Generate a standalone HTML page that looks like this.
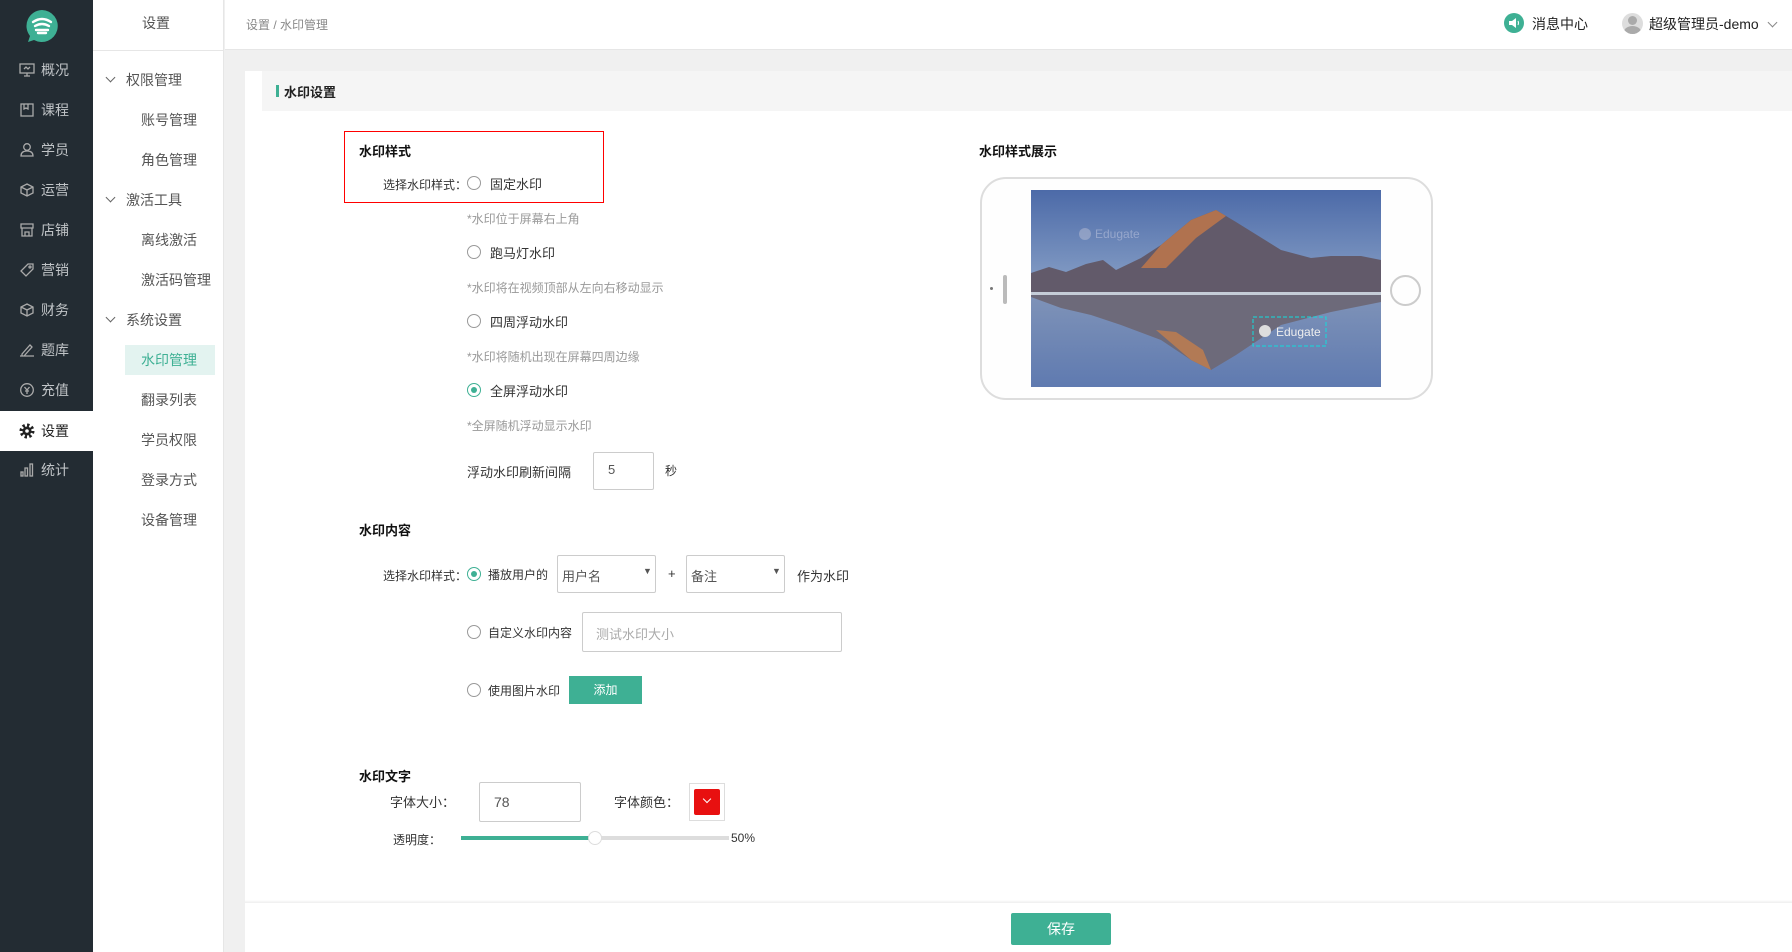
<!DOCTYPE html>
<html><head><meta charset="utf-8"><style>
*{margin:0;padding:0;box-sizing:border-box}
body{width:1792px;height:952px;overflow:hidden;position:relative;background:#f0f0f0;font-family:"Liberation Sans","Noto Sans CJK SC",sans-serif;color:#333}
.a{position:absolute;white-space:nowrap}
#side{left:0;top:0;width:93px;height:952px;background:#232c33}
.si{left:0;width:93px;height:40px;color:#c0c4c7;font-size:14px;line-height:40px}
.si svg{position:absolute;left:19px;top:13px}
.si span{position:absolute;left:41px}
#col2{left:93px;top:0;width:131px;height:952px;background:#fff;border-right:1px solid #e6e6e6}
.n{font-size:14px;color:#555;line-height:20px}
.chev{width:7px;height:7px;border-right:1.3px solid #666;border-bottom:1.3px solid #666;transform:rotate(45deg)}
.lbl{font-size:13px;color:#333}
.hint{font-size:12px;color:#999}
.radio{width:14px;height:14px;border:1px solid #999;border-radius:50%;background:#fff}
.radio.on{border-color:#3eb094}
.radio.on:after{content:"";position:absolute;left:3px;top:3px;width:6px;height:6px;border-radius:50%;background:#3eb094}
.box{border:1px solid #ccc;background:#fff;border-radius:2px}
.b{font-weight:bold;font-size:13px;color:#111}
</style></head><body>
<div class="a" id="side"></div>
<svg class="a" style="left:24px;top:9px" width="36" height="34" viewBox="0 0 36 34"><path d="M18 1a16 16 0 1 1-8 30l-6 2 2-6A16 16 0 0 1 18 1z" fill="#3eb094"/><path d="M9 13q9-6 18 0M11 17q7-4 14 0M12 21h12M14 24h8" stroke="#fff" stroke-width="2.4" fill="none" stroke-linecap="round"/></svg>
<div class="a si" style="top:50px"><svg width="16" height="14" viewBox="0 0 16 14" fill="none" stroke="#aaa" stroke-width="1.3"><rect x="1" y="1" width="14" height="9"/><path d="M5 13h6M8 10v3M5 6l2-2 2 2 2-2"/></svg><span>概况</span></div>
<div class="a si" style="top:90px"><svg width="16" height="14" viewBox="0 0 16 14" fill="none" stroke="#aaa" stroke-width="1.3"><rect x="2" y="1" width="12" height="12"/><path d="M5 1v5l2-1 2 1V1"/></svg><span>课程</span></div>
<div class="a si" style="top:130px"><svg width="16" height="14" viewBox="0 0 16 14" fill="none" stroke="#aaa" stroke-width="1.3"><circle cx="8" cy="4" r="3.3"/><path d="M2 13q0-5 6-5t6 5z"/></svg><span>学员</span></div>
<div class="a si" style="top:170px"><svg width="16" height="14" viewBox="0 0 16 14" fill="none" stroke="#aaa" stroke-width="1.3"><path d="M8 1l6 3v6l-6 3-6-3V4zM2 4l6 3 6-3M8 7v6"/></svg><span>运营</span></div>
<div class="a si" style="top:210px"><svg width="16" height="14" viewBox="0 0 16 14" fill="none" stroke="#aaa" stroke-width="1.3"><path d="M2 1h12v4H2zM3 5v8h10V5M6 13V9h4v4"/></svg><span>店铺</span></div>
<div class="a si" style="top:250px"><svg width="16" height="14" viewBox="0 0 16 14" fill="none" stroke="#aaa" stroke-width="1.3"><path d="M9 1h5v5l-7 7-5-5z"/><circle cx="11" cy="4" r="1"/></svg><span>营销</span></div>
<div class="a si" style="top:290px"><svg width="16" height="14" viewBox="0 0 16 14" fill="none" stroke="#aaa" stroke-width="1.3"><path d="M8 1l6 3v6l-6 3-6-3V4zM2 4l6 3 6-3M8 7v6"/></svg><span>财务</span></div>
<div class="a si" style="top:330px"><svg width="16" height="14" viewBox="0 0 16 14" fill="none" stroke="#aaa" stroke-width="1.3"><path d="M3 11l8-9 2 2-8 9H3zM1 13h14"/></svg><span>题库</span></div>
<div class="a si" style="top:370px"><svg width="16" height="14" viewBox="0 0 16 14" fill="none" stroke="#aaa" stroke-width="1.3"><circle cx="8" cy="7" r="6.3"/><path d="M5.5 4L8 7l2.5-3M8 7v4M6 8h4"/></svg><span>充值</span></div>
<div class="a si" style="top:411px;background:#fff;color:#222;"><svg width="16" height="16" viewBox="0 0 16 16" style="top:12px"><circle cx="8" cy="8" r="5.5" fill="none" stroke="#222" stroke-width="4" stroke-dasharray="2.2 2.1"/><circle cx="8" cy="8" r="4.5" fill="#222"/><circle cx="8" cy="8" r="1.8" fill="#fff"/></svg><span>设置</span></div>
<div class="a si" style="top:450px"><svg width="16" height="14" viewBox="0 0 16 14" fill="none" stroke="#aaa" stroke-width="1.3"><rect x="2" y="9" width="2" height="4"/><rect x="6" y="5" width="2.5" height="8"/><rect x="11" y="1" width="2.5" height="12"/></svg><span>统计</span></div>

<div class="a" id="col2"></div>
<div class="a" style="left:93px;top:50px;width:131px;height:1px;background:#e6e6e6"></div>
<div class="a n" style="left:142px;top:13px">设置</div>
<div class="a chev" style="left:107px;top:74px"></div><div class="a n" style="left:126px;top:70px">权限管理</div>
<div class="a n" style="left:141px;top:110px">账号管理</div>
<div class="a n" style="left:141px;top:150px">角色管理</div>
<div class="a chev" style="left:107px;top:194px"></div><div class="a n" style="left:126px;top:190px">激活工具</div>
<div class="a n" style="left:141px;top:230px">离线激活</div>
<div class="a n" style="left:141px;top:270px">激活码管理</div>
<div class="a chev" style="left:107px;top:314px"></div><div class="a n" style="left:126px;top:310px">系统设置</div>
<div class="a" style="left:125px;top:345px;width:90px;height:30px;background:#e3f3f0"></div>
<div class="a n" style="left:141px;top:350px;color:#3eb094">水印管理</div>
<div class="a n" style="left:141px;top:390px">翻录列表</div>
<div class="a n" style="left:141px;top:430px">学员权限</div>
<div class="a n" style="left:141px;top:470px">登录方式</div>
<div class="a n" style="left:141px;top:510px">设备管理</div>

<div class="a" style="left:225px;top:0;width:1567px;height:50px;background:#fff;border-bottom:1px solid #e6e6e6"></div>
<div class="a" style="left:246px;top:16px;font-size:12px;color:#888">设置 / 水印管理</div>
<div class="a" style="left:1504px;top:13px;width:20px;height:20px;border-radius:50%;background:#3eb094"></div>
<svg class="a" style="left:1508px;top:17px" width="12" height="12" viewBox="0 0 12 12"><path d="M1 4h3l4-3v10L4 8H1z" fill="#fff"/><path d="M10 4q1 2 0 4" stroke="#fff" fill="none"/></svg>
<div class="a" style="left:1532px;top:14px;font-size:14px;color:#222">消息中心</div>
<div class="a" style="left:1622px;top:13px;width:21px;height:21px;border-radius:50%;background:#ddd;overflow:hidden"><div class="a" style="left:6px;top:3px;width:9px;height:9px;border-radius:50%;background:#aaa"></div><div class="a" style="left:2px;top:13px;width:17px;height:12px;border-radius:50%;background:#aaa"></div></div>
<div class="a" style="left:1649px;top:14px;font-size:14px;color:#222">超级管理员-demo</div>
<div class="a chev" style="left:1769px;top:19px;border-color:#888"></div>

<div class="a" style="left:245px;top:71px;width:1547px;height:831px;background:#fff"></div>
<div class="a" style="left:262px;top:71px;width:1530px;height:40px;background:#f5f5f5"></div>
<div class="a" style="left:276px;top:85px;width:3px;height:12px;background:#3eb094"></div>
<div class="a" style="left:284px;top:82px;font-size:13px;color:#222;font-weight:bold">水印设置</div>

<div class="a" style="left:344px;top:131px;width:260px;height:72px;border:1px solid #f00"></div>
<div class="a b" style="left:359px;top:141px">水印样式</div>
<div class="a lbl" style="left:383px;top:176px;font-size:12px">选择水印样式：</div>
<div class="a radio" style="left:467px;top:176px"></div><div class="a lbl" style="left:490px;top:174px">固定水印</div>
<div class="a hint" style="left:467px;top:210px">*水印位于屏幕右上角</div>
<div class="a radio" style="left:467px;top:245px"></div><div class="a lbl" style="left:490px;top:243px">跑马灯水印</div>
<div class="a hint" style="left:467px;top:279px">*水印将在视频顶部从左向右移动显示</div>
<div class="a radio" style="left:467px;top:314px"></div><div class="a lbl" style="left:490px;top:312px">四周浮动水印</div>
<div class="a hint" style="left:467px;top:348px">*水印将随机出现在屏幕四周边缘</div>
<div class="a radio on" style="left:467px;top:383px"></div><div class="a lbl" style="left:490px;top:381px">全屏浮动水印</div>
<div class="a hint" style="left:467px;top:417px">*全屏随机浮动显示水印</div>
<div class="a lbl" style="left:467px;top:462px">浮动水印刷新间隔</div>
<div class="a box" style="left:593px;top:452px;width:61px;height:38px"></div>
<div class="a lbl" style="left:608px;top:462px;color:#555">5</div>
<div class="a lbl" style="left:665px;top:462px;font-size:12px">秒</div>

<div class="a b" style="left:359px;top:520px">水印内容</div>
<div class="a lbl" style="left:383px;top:567px;font-size:12px">选择水印样式：</div>
<div class="a radio on" style="left:467px;top:567px"></div><div class="a lbl" style="left:488px;top:566px;font-size:12px">播放用户的</div>
<div class="a box" style="left:557px;top:555px;width:99px;height:38px"></div>
<div class="a lbl" style="left:562px;top:566px;color:#555">用户名</div><div class="a" style="left:643px;top:566px;font-size:9px;color:#555">▼</div>
<div class="a lbl" style="left:668px;top:566px">+</div>
<div class="a box" style="left:686px;top:555px;width:99px;height:38px"></div>
<div class="a lbl" style="left:691px;top:566px;color:#555">备注</div><div class="a" style="left:772px;top:566px;font-size:9px;color:#555">▼</div>
<div class="a lbl" style="left:797px;top:566px">作为水印</div>
<div class="a radio" style="left:467px;top:625px"></div><div class="a lbl" style="left:488px;top:624px;font-size:12px">自定义水印内容</div>
<div class="a box" style="left:582px;top:612px;width:260px;height:40px"></div>
<div class="a lbl" style="left:596px;top:624px;color:#aaa">测试水印大小</div>
<div class="a radio" style="left:467px;top:683px"></div><div class="a lbl" style="left:488px;top:682px;font-size:12px">使用图片水印</div>
<div class="a" style="left:569px;top:676px;width:73px;height:28px;background:#3eb094;color:#fff;font-size:12px;line-height:28px;text-align:center">添加</div>

<div class="a b" style="left:359px;top:766px">水印文字</div>
<div class="a lbl" style="left:390px;top:792px">字体大小：</div>
<div class="a box" style="left:479px;top:782px;width:102px;height:40px"></div>
<div class="a lbl" style="left:494px;top:794px;color:#555;font-size:14px">78</div>
<div class="a lbl" style="left:614px;top:792px">字体颜色：</div>
<div class="a" style="left:689px;top:783px;width:36px;height:38px;border:1px solid #ddd;background:#fff"></div>
<div class="a" style="left:694px;top:789px;width:26px;height:26px;background:#e81010;border-radius:2px"></div>
<div class="a" style="left:704px;top:796px;width:6px;height:6px;border-right:1.3px solid #fff;border-bottom:1.3px solid #fff;transform:rotate(45deg)"></div>
<div class="a lbl" style="left:393px;top:831px;font-size:12px">透明度：</div>
<div class="a" style="left:461px;top:836px;width:268px;height:4px;background:#ddd"></div>
<div class="a" style="left:461px;top:836px;width:134px;height:4px;background:#3eb094"></div>
<div class="a" style="left:588px;top:831px;width:14px;height:14px;border-radius:50%;background:#fff;border:1px solid #ddd"></div>
<div class="a lbl" style="left:731px;top:831px;font-size:12px">50%</div>

<div class="a b" style="left:979px;top:141px">水印样式展示</div>
<div class="a" style="left:980px;top:177px;width:453px;height:223px;border:2px solid #ddd;border-radius:26px;background:#fefefe"></div>
<div class="a" style="left:990px;top:287px;width:3px;height:3px;border-radius:50%;background:#777"></div>
<div class="a" style="left:1003px;top:275px;width:4px;height:29px;border-radius:2px;background:#bbb"></div>
<div class="a" style="left:1390px;top:275px;width:31px;height:31px;border-radius:50%;border:2px solid #ccc"></div>
<svg class="a" style="left:1031px;top:190px" width="350" height="197" viewBox="0 0 350 197">
<defs><linearGradient id="s" x1="0" y1="0" x2="0" y2="1"><stop offset="0" stop-color="#4c6aa8"/><stop offset="1" stop-color="#8ba3c8"/></linearGradient>
<linearGradient id="w" x1="0" y1="0" x2="0" y2="1"><stop offset="0" stop-color="#7f93b8"/><stop offset="1" stop-color="#5f7ab0"/></linearGradient></defs>
<rect width="350" height="105" fill="url(#s)"/>
<rect y="105" width="350" height="92" fill="url(#w)"/>
<path d="M0 83L18 77L35 82L55 74L72 70L85 80L110 68L130 55L160 30L185 20L205 32L250 60L280 68L300 66L330 66L350 70V105H0z" fill="#625a6a"/>
<path d="M110 78L130 55L160 30L185 20L195 26L165 48L135 78z" fill="#b0724f"/>
<path d="M0 107L30 118L60 125L90 135L130 150L160 170L180 180L205 165L250 135L300 122L350 112V105H0z" fill="#6d6a7a"/>
<path d="M125 140L160 170L180 180L172 160L145 142z" fill="#b27a55"/>
<rect y="102" width="350" height="3" fill="#c5cdd8"/>
<rect x="222" y="127" width="73" height="29" fill="none" stroke="#1dd" stroke-dasharray="4 2"/>
<circle cx="234" cy="141" r="6" fill="#ddd"/><text x="245" y="146" font-size="12" fill="#eee" font-family="Liberation Sans">Edugate</text>
<circle cx="54" cy="44" r="6" fill="#ccd" opacity=".4"/><text x="64" y="48" font-size="12" fill="#dde" opacity=".4" font-family="Liberation Sans">Edugate</text>
</svg>

<div class="a" style="left:245px;top:900px;width:1547px;height:3px;background:linear-gradient(#fff,#eee)"></div>
<div class="a" style="left:245px;top:903px;width:1547px;height:49px;background:#fff"></div>
<div class="a" style="left:1011px;top:913px;width:100px;height:32px;background:#3eb094;border-radius:2px;color:#fff;font-size:14px;line-height:32px;text-align:center">保存</div>
</body></html>
